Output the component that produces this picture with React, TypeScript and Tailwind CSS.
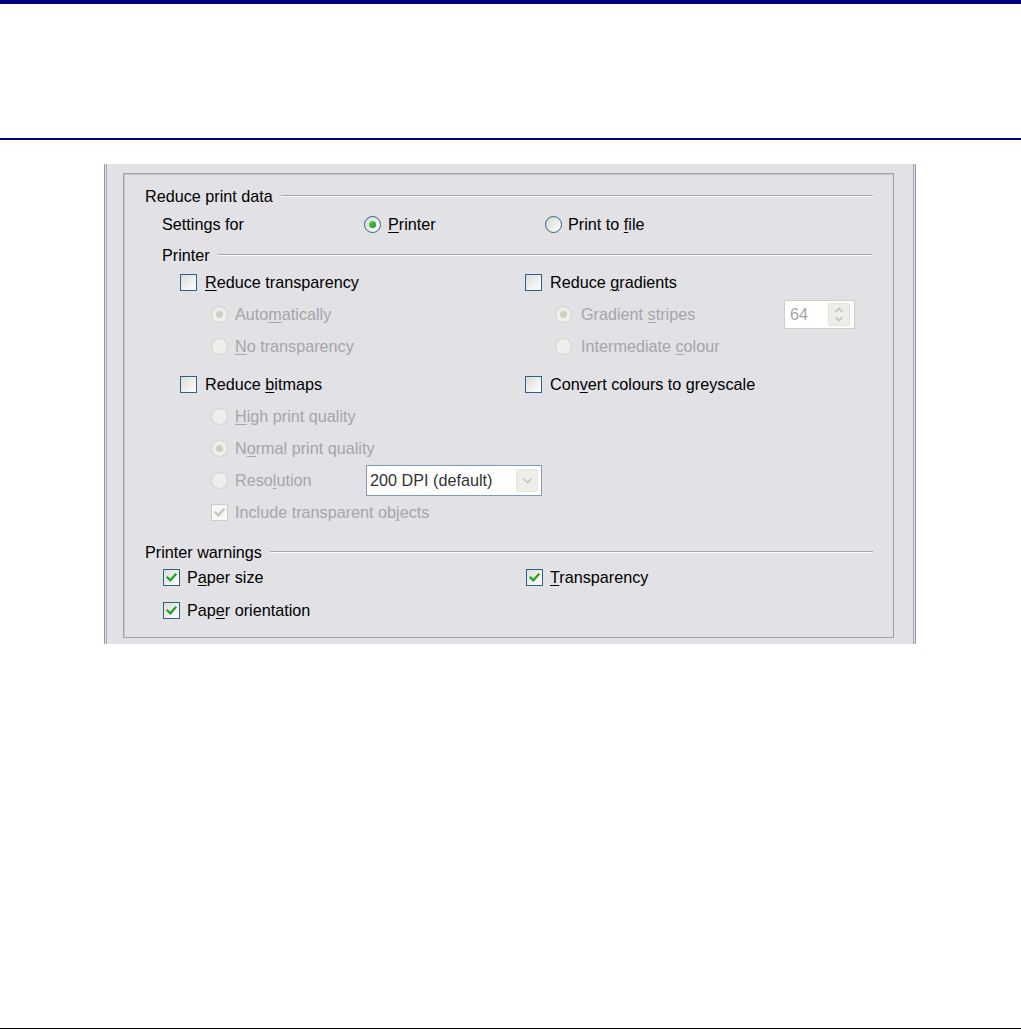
import React from "react";

const U = ({ children }: { children: React.ReactNode }) => (
  <span className="underline decoration-1 underline-offset-[2px]">{children}</span>
);

function Radio({ checked, disabled }: { checked?: boolean; disabled?: boolean }) {
  return (
    <span
      className={
        disabled
          ? "flex w-[17px] h-[17px] shrink-0 items-center justify-center rounded-full border border-[#d3d2ca] bg-[#eeeeea]"
          : "flex w-[17px] h-[17px] shrink-0 items-center justify-center rounded-full border border-[#2c628b] bg-gradient-to-br from-[#d6d6d0] to-[#ffffff]"
      }
    >
      {checked && (
        <span
          className={
            disabled
              ? "w-[7px] h-[7px] rounded-full bg-[#cfcdc4]"
              : "w-[7px] h-[7px] rounded-full bg-gradient-to-br from-[#5fd35f] to-[#1c8f1c]"
          }
        />
      )}
    </span>
  );
}

function Check({ checked, disabled }: { checked?: boolean; disabled?: boolean }) {
  return (
    <span
      className={
        disabled
          ? "flex w-[17px] h-[17px] shrink-0 items-center justify-center border border-[#cfcec6] bg-[#f7f7f5]"
          : "flex w-[17px] h-[17px] shrink-0 items-center justify-center border border-[#2c628b] bg-gradient-to-br from-[#dcdcd7] to-[#ffffff]"
      }
    >
      {checked && (
        <svg width="11" height="11" viewBox="0 0 11 11">
          <path
            d="M1.5 5.5 L4.3 8.3 L9.5 2.5"
            fill="none"
            stroke={disabled ? "#c4c3ba" : "#21a121"}
            strokeWidth="2.2"
            strokeLinecap="square"
          />
        </svg>
      )}
    </span>
  );
}

function Item({
  kind,
  checked,
  disabled,
  children,
  gap = "ml-[7px]",
}: {
  kind: "radio" | "check";
  checked?: boolean;
  disabled?: boolean;
  children: React.ReactNode;
  gap?: string;
}) {
  return (
    <div className="flex items-center">
      {kind === "radio" ? <Radio checked={checked} disabled={disabled} /> : <Check checked={checked} disabled={disabled} />}
      <span className={`${gap} whitespace-nowrap ${disabled ? "text-[#a6a6a6]" : "text-[#000000]"}`}>{children}</span>
    </div>
  );
}

function Heading({ children, pl, pr }: { children: React.ReactNode; pl: string; pr: string }) {
  return (
    <div className={`flex items-center h-[24px] ${pl} ${pr}`}>
      <span className="whitespace-nowrap text-black">{children}</span>
      <div className="flex-1 ml-[8px] h-[2px] bg-[#a7a7ab] border-b border-[#fbfbfc]" />
    </div>
  );
}

export default function App() {
  return (
    <div
      className="w-[1021px] h-[1030px] bg-white flex flex-col overflow-hidden text-[16.2px] leading-[24px]"
      style={{ fontFamily: '"Liberation Sans", Arial, sans-serif' }}
    >
      <div className="h-[4px] bg-[#000080]" />
      <div className="h-[134px]" />
      <div className="h-[2px] bg-[#000080]" />
      <div className="h-[24px]" />

      <div className="ml-[104px] w-[812px] h-[480px] border-x border-[#9494a8] bg-[#e1e1e6] px-[1px]">
        <div className="h-full border-x border-[#a5a5b8] pt-[9px] pl-[16px]">
          <div className="w-[771px] h-[465px] border border-[#a3a3a7] shadow-[inset_1px_1px_0_#c9c9cd] pt-[10px]">
            {/* Reduce print data */}
            <Heading pl="pl-[21px]" pr="pr-[20px]">Reduce print data</Heading>

            {/* Settings for */}
            <div className="mt-[4px] flex items-center h-[24px] pl-[38px]">
              <div className="w-[202px] shrink-0">Settings for</div>
              <div className="w-[181px] shrink-0">
                <Item kind="radio" checked>
                  <U>P</U>rinter
                </Item>
              </div>
              <Item kind="radio" gap="ml-[6px]">
                Print to <U>f</U>ile
              </Item>
            </div>

            {/* Printer */}
            <div className="mt-[7px]">
              <Heading pl="pl-[38px]" pr="pr-[21px]">Printer</Heading>
            </div>

            <div className="mt-[3px] flex items-center h-[24px] pl-[56px]">
              <div className="w-[345px] shrink-0">
                <Item kind="check" gap="ml-[8px]">
                  <U>R</U>educe transparency
                </Item>
              </div>
              <Item kind="check" gap="ml-[8px]">
                Reduce <U>g</U>radients
              </Item>
            </div>

            <div className="mt-[8px] flex items-center h-[24px] pl-[87px]">
              <div className="w-[344px] shrink-0">
                <Item kind="radio" checked disabled>
                  Auto<U>m</U>atically
                </Item>
              </div>
              <div className="w-[229px] shrink-0">
                <Item kind="radio" checked disabled gap="ml-[9px]">
                  Gradient <U>s</U>tripes
                </Item>
              </div>
              <div className="flex items-center w-[71px] h-[29px] shrink-0 border border-[#cfcdc4] bg-white">
                <span className="ml-[5px] w-[38px] text-[#a6a6a6]">64</span>
                <div className="flex flex-col items-center justify-center w-[22px] h-[23px] rounded-[2px] bg-[#eeeee9] border border-[#e4e4de]">
                  <svg width="10" height="6" viewBox="0 0 10 6">
                    <path d="M1.5 5 L5 1.5 L8.5 5" fill="none" stroke="#c3c2ba" strokeWidth="1.6" />
                  </svg>
                  <div className="h-[3px]" />
                  <svg width="10" height="6" viewBox="0 0 10 6">
                    <path d="M1.5 1 L5 4.5 L8.5 1" fill="none" stroke="#c3c2ba" strokeWidth="1.6" />
                  </svg>
                </div>
              </div>
            </div>

            <div className="mt-[8px] flex items-center h-[24px] pl-[87px]">
              <div className="w-[344px] shrink-0">
                <Item kind="radio" disabled>
                  <U>N</U>o transparency
                </Item>
              </div>
              <Item kind="radio" disabled gap="ml-[9px]">
                Intermediate <U>c</U>olour
              </Item>
            </div>

            <div className="mt-[14px] flex items-center h-[24px] pl-[56px]">
              <div className="w-[345px] shrink-0">
                <Item kind="check" gap="ml-[8px]">
                  Reduce <U>b</U>itmaps
                </Item>
              </div>
              <Item kind="check" gap="ml-[8px]">
                Con<U>v</U>ert colours to greyscale
              </Item>
            </div>

            <div className="mt-[8px] flex items-center h-[24px] pl-[87px]">
              <Item kind="radio" disabled>
                <U>H</U>igh print quality
              </Item>
            </div>

            <div className="mt-[8px] flex items-center h-[24px] pl-[87px]">
              <Item kind="radio" checked disabled>
                N<U>o</U>rmal print quality
              </Item>
            </div>

            <div className="mt-[8px] flex items-center h-[24px] pl-[87px]">
              <div className="w-[155px] shrink-0">
                <Item kind="radio" disabled>
                  Reso<U>l</U>ution
                </Item>
              </div>
              <div className="flex items-center w-[176px] h-[31px] shrink-0 border border-[#7f9db9] bg-white">
                <span className="ml-[3px] flex-1 text-[#333333] whitespace-nowrap">200 DPI (default)</span>
                <div className="mr-[3px] flex items-center justify-center w-[22px] h-[23px] rounded-[2px] bg-[#efefea] border border-[#e6e6e0]">
                  <svg width="11" height="7" viewBox="0 0 11 7">
                    <path d="M1.5 1.5 L5.5 5.5 L9.5 1.5" fill="none" stroke="#c6c5bd" strokeWidth="1.6" />
                  </svg>
                </div>
              </div>
            </div>

            <div className="mt-[8px] flex items-center h-[24px] pl-[87px]">
              <Item kind="check" checked disabled>
                Include transparent ob<U>j</U>ects
              </Item>
            </div>

            {/* Printer warnings */}
            <div className="mt-[16px]">
              <Heading pl="pl-[21px]" pr="pr-[20px]">Printer warnings</Heading>
            </div>

            <div className="mt-[1px] flex items-center h-[24px] pl-[39px]">
              <div className="w-[363px] shrink-0">
                <Item kind="check" checked>
                  P<U>a</U>per size
                </Item>
              </div>
              <Item kind="check" checked>
                <U>T</U>ransparency
              </Item>
            </div>

            <div className="mt-[9px] flex items-center h-[24px] pl-[39px]">
              <Item kind="check" checked>
                Pap<U>e</U>r orientation
              </Item>
            </div>
          </div>
        </div>
      </div>

      <div className="mt-auto mb-[1px] h-[1px] bg-black" />
    </div>
  );
}
